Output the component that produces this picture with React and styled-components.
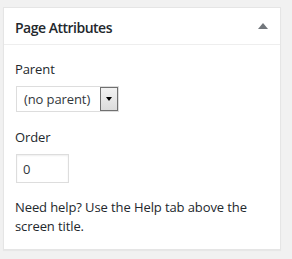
import React from "react"
import styled, { createGlobalStyle } from "styled-components"

const Global = createGlobalStyle`
    body {
        margin: 0;
        background: #f1f1f1;
        font-family: "Open Sans", "Noto Sans", sans-serif;
        color: #23282d;
    }
    * { box-sizing: border-box; }
`

const Page = styled.div`
    padding: 7px 11px 10px 3px;
`

const Box = styled.div`
    background: #fff;
    border: 1px solid #e5e5e5;
    box-shadow: 0 1px 1px rgba(0,0,0,0.04);
`

const Header = styled.div`
    display: flex;
    align-items: center;
    justify-content: space-between;
    height: 37px;
    padding: 2px 12px 0 11px;
    border-bottom: 1px solid #eee;

    h2 {
        margin: 0;
        font-size: 14px;
        font-weight: 600;
        letter-spacing: -0.5px;
        color: #23282d;
    }
`

const Toggle = styled.span`
    width: 0;
    height: 0;
    margin-top: -2px;
    border-left: 5px solid transparent;
    border-right: 5px solid transparent;
    border-bottom: 6px solid #72777c;
`

const Inside = styled.div`
    padding: 15px 12px 13px 11px;
    font-size: 13px;
    line-height: 18px;
    letter-spacing: -0.1px;
`

const Label = styled.p`
    margin: 0 0 8px;
    font-weight: 400;
`

const Select = styled.div`
    display: flex;
    align-items: center;
    justify-content: space-between;
    width: 103px;
    height: 26px;
    margin: 0 0 16px 1px;
    border: 1px solid #ddd;
    background: #fff;
    padding: 0 0 0 7px;
    color: #32373c;
    span { white-space: nowrap; }
`

const Arrow = styled.div`
    display: flex;
    align-items: center;
    justify-content: center;
    width: 18px;
    height: 24px;
    border: 1px solid #707070;
    background: linear-gradient(#f2f2f2, #dcdcdc);
    &::after {
        content: "";
        border-left: 3px solid transparent;
        border-right: 3px solid transparent;
        border-top: 4px solid #000;
    }
`

const NumberInput = styled.input`
    display: block;
    width: 53px;
    height: 29px;
    margin: 0 0 15px 1px;
    padding: 0 6px;
    border: 1px solid #ddd;
    box-shadow: inset 0 1px 2px rgba(0,0,0,0.07);
    font: inherit;
    color: #32373c;
    outline: none;
`

const Help = styled.p`
    margin: 0;
    line-height: 19px;
`

export default function App() {
    return (
        <Page>
            <Global />
            <Box>
                <Header>
                    <h2>Page Attributes</h2>
                    <Toggle />
                </Header>
                <Inside>
                    <Label>Parent</Label>
                    <Select>
                        <span>(no parent)</span>
                        <Arrow />
                    </Select>
                    <Label>Order</Label>
                    <NumberInput defaultValue="0" />
                    <Help>Need help? Use the Help tab above the screen title.</Help>
                </Inside>
            </Box>
        </Page>
    )
}
